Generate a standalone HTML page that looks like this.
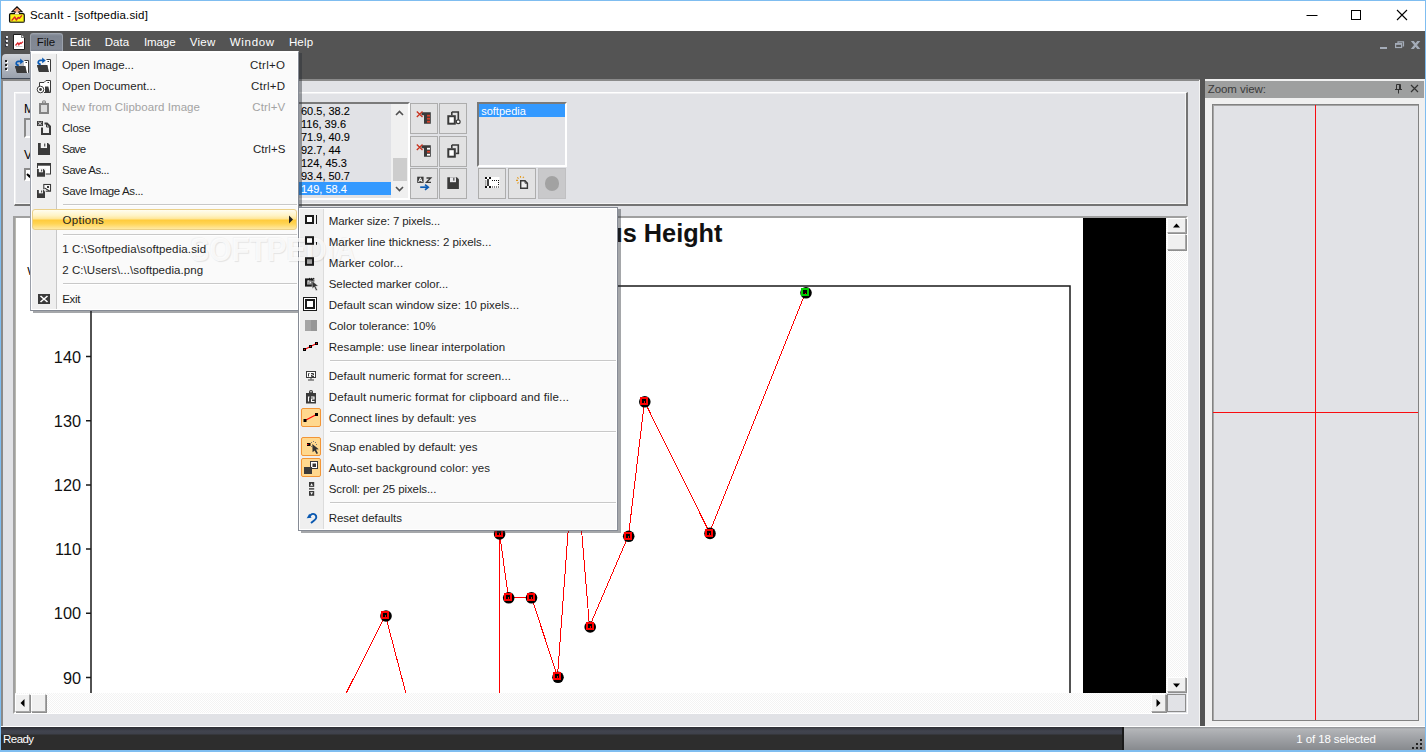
<!DOCTYPE html>
<html>
<head>
<meta charset="utf-8">
<title>ScanIt - [softpedia.sid]</title>
<style>
html,body{margin:0;padding:0;}
body{width:1426px;height:752px;overflow:hidden;background:#545454;font-family:"Liberation Sans",sans-serif;font-size:12px;color:#1e1e1e;position:relative;}
.a{position:absolute;}
.t{position:absolute;white-space:nowrap;line-height:14px;}
#win{left:0;top:0;width:1424px;height:750px;border:1px solid #7fbdf0;}
#title{left:1px;top:1px;width:1424px;height:30px;background:#fff;}
#client{left:3px;top:81px;width:1196px;height:645px;background:#e1e2e6;}
.mi{position:absolute;left:62px;white-space:nowrap;line-height:14px;font-size:12px;color:#1e1e1e;}
.sc{position:absolute;left:0;width:286px;text-align:right;white-space:nowrap;line-height:14px;font-size:12px;color:#1e1e1e;}
.sep{position:absolute;height:1px;background:#c5c5c5;border-bottom:1px solid #fff;}
.btn{position:absolute;width:28px;height:31px;background:#e2e2e3;border:1px solid #adadad;box-sizing:border-box;}
</style>
</head>
<body>
<div class="a" id="win"></div>
<div class="a" id="title"></div>

<!-- title bar -->
<svg class="a" style="left:8px;top:5px" width="18" height="19" viewBox="8 5 18 19">
  <defs><linearGradient id="ga" x1="0" y1="0" x2="0" y2="1"><stop offset="0" stop-color="#ee7a44"/><stop offset="0.55" stop-color="#f4a57e"/><stop offset="1" stop-color="#fff"/></linearGradient></defs>
  <rect x="9.600" y="13.600" width="14.600" height="8.600" rx="1.200" fill="#fbf415" stroke="#0a0a0a" stroke-width="1.300"/>
  <path d="M10.500 21.500 H23.500 V15" fill="none" stroke="#b9b21a" stroke-width="0.800"/>
  <path d="M17 6.800 L22 11.700 H19 V14.300 H15 V11.700 H12 Z" fill="url(#ga)"/>
  <path d="M15 13 V11.700 H12 L17 6.800 L22 11.700 H19 V13" fill="none" stroke="#0a0a0a" stroke-width="1.100" stroke-linejoin="miter"/>
  <path d="M11.600 20.600 L14.800 17 L16.300 20 L18.200 17.400 L19.400 18.200 L21.900 15.400" fill="none" stroke="#d8242a" stroke-width="1.400" stroke-linejoin="round"/>
</svg>
<div class="t" style="left:30.0px;top:8.400px;font-size:11.5px;letter-spacing:0.176px;color:#000;">ScanIt - [softpedia.sid]</div>
<svg class="a" style="left:1300px;top:1px" width="124" height="30" viewBox="0 0 124 30">
  <path d="M6.5 14.5 H17.5" stroke="#000" stroke-width="1" fill="none"/>
  <rect x="51.500" y="9.500" width="9" height="9" stroke="#000" stroke-width="1" fill="none"/>
  <path d="M97 9 L107 19 M107 9 L97 19" stroke="#000" stroke-width="1.1" fill="none"/>
</svg>

<!-- menubar icons (left) -->
<div class="a" style="left:6px;top:36px;width:2px;height:2px;background:#e6e8ee;box-shadow:0 4px 0 #e6e8ee,0 8px 0 #e6e8ee,-1px 1px 0 #2e3340,-1px 5px 0 #2e3340,-1px 9px 0 #2e3340;"></div>
<svg class="a" style="left:13px;top:34px" width="12" height="16" viewBox="0 0 12 16">
  <path d="M0.500 0.500 H8.500 L11.500 3.500 V15.500 H0.500 Z" fill="#fff" stroke="#1c1c1c" stroke-width="1"/>
  <path d="M8.500 0.500 V3.500 H11.500" fill="#e6e6e6" stroke="#555" stroke-width="0.800"/>
  <path d="M3 12.500 H9.500" stroke="#d0d0d0" stroke-width="1"/>
  <path d="M2.500 11.500 L4.800 8.800 L5.800 10.800 L7.200 8.800 L8 9.600 L10 7.600" fill="none" stroke="#d8242a" stroke-width="1.300"/>
</svg>
<!-- File menu button (open) -->
<div class="a" style="left:30px;top:33px;width:33px;height:19px;border-radius:3px 3px 0 0;background:linear-gradient(#8e95a1 0,#7e8591 2px,#848a96 15px,#6f7581 18px);box-sizing:border-box;border:1px solid #9ca2ac;border-bottom:none;"></div>
<div class="t" style="left:36.7px;top:34.600px;font-size:11.5px;letter-spacing:-0.008px;color:#111;">File</div>
<div class="t" style="left:69.7px;top:34.600px;font-size:11.5px;letter-spacing:0.245px;color:#fff;">Edit</div>
<div class="t" style="left:104.7px;top:34.600px;font-size:11.5px;letter-spacing:0.052px;color:#fff;">Data</div>
<div class="t" style="left:143.9px;top:34.600px;font-size:11.5px;letter-spacing:-0.072px;color:#fff;">Image</div>
<div class="t" style="left:189.7px;top:34.600px;font-size:11.5px;letter-spacing:0.271px;color:#fff;">View</div>
<div class="t" style="left:229.8px;top:34.600px;font-size:11.5px;letter-spacing:0.683px;color:#fff;">Window</div>
<div class="t" style="left:288.9px;top:34.600px;font-size:11.5px;letter-spacing:0.162px;color:#fff;">Help</div>
<!-- MDI child buttons -->
<svg class="a" style="left:1376px;top:38px" width="48" height="14" viewBox="1376 38 48 14">
  <rect x="1380" y="47" width="7" height="2" fill="#a4acb8"/>
  <path d="M1398 43 V41.800 H1403.500 V46 H1402.500" fill="none" stroke="#a4acb8" stroke-width="1.200"/>
  <rect x="1395.600" y="44.100" width="6" height="3.400" fill="none" stroke="#a4acb8" stroke-width="1.200"/><rect x="1395" y="43" width="7.200" height="1.500" fill="#a4acb8"/>
  <path d="M1410.800 41 H1413.800 L1420.300 49 H1417.300 Z M1417.300 41 H1420.300 L1413.800 49 H1410.800 Z" fill="#a4acb8"/>
</svg>

<!-- toolbar -->
<div class="a" style="left:2px;top:54px;width:296px;height:24px;border-radius:4px 0 0 0;background:linear-gradient(#d0d3d9,#b3b8c1 50%,#99a1ad);"></div>
<div class="a" style="left:5px;top:60px;width:2px;height:2px;background:#222;box-shadow:0 4px 0 #222,0 8px 0 #222, 1px 1px 0 #fff, 1px 5px 0 #fff, 1px 9px 0 #fff;"></div>
<svg class="a" style="left:14px;top:58px" width="16" height="16" viewBox="0 0 16 16"><path d="M10.500 2.500 H14.500 V14.500" fill="none" stroke="#3a3a3a" stroke-width="1"/><rect x="10" y="3" width="4" height="6" fill="#fff"/><rect x="11.500" y="4" width="1.500" height="1" fill="#3a3a3a"/>
<path d="M1 8 H11.300 L13 15 H3 Z" fill="#3a3a3a"/><path d="M13 14.500 H14.500" stroke="#3a3a3a" stroke-width="1"/><rect x="11.500" y="8" width="2.500" height="6.500" fill="#fff"/><path d="M11.300 8 L13 15 H14 V14 Z" fill="#fff"/><path d="M1 8 H11.300 L13 15 H3 Z" fill="#3a3a3a"/>
<path d="M4.800 7.300 C1.500 7.300 1.300 3.500 4.500 3.300 L7 3.300" fill="none" stroke="#0a5ab4" stroke-width="1.700"/><path d="M6.200 0.600 L9.700 3.400 L6.200 6.200 Z" fill="#0a5ab4"/></svg>

<!-- client area -->
<div class="a" style="left:2px;top:78px;width:296px;height:1px;background:#3f4856;"></div><div class="a" style="left:1px;top:79px;width:1199px;height:648px;background:#8a8a8a;"></div>
<div class="a" id="client"></div>
<!-- group box -->
<div class="a" style="left:14px;top:92px;width:1174px;height:114px;box-sizing:border-box;border-top:1px solid #fff;border-left:1px solid #fff;border-right:2px solid #747474;border-bottom:2px solid #747474;box-shadow:inset 1px 1px 0 #f0f0f2,inset -1px -1px 0 #f4f4f4;"></div>
<div class="t" style="left:24px;top:102px;color:#000;">Marker</div>
<div class="a" style="left:24px;top:118px;width:90px;height:20px;box-sizing:border-box;border:2px solid;border-color:#8a8a8a #fff #fff #8a8a8a;background:#e1e2e6;"></div>
<div class="t" style="left:24px;top:148px;color:#000;">View</div>
<div class="a" style="left:24px;top:168px;width:13px;height:13px;box-sizing:border-box;border:2px solid;border-color:#8a8a8a #fff #fff #8a8a8a;background:#fff;"></div>
<svg class="a" style="left:26px;top:170px" width="9" height="9" viewBox="0 0 9 9"><path d="M1 4 L3.500 6.500 L8 1.500" stroke="#000" stroke-width="2" fill="none"/></svg>
<!-- data listbox -->
<div class="a" style="left:200px;top:102px;width:210px;height:98px;box-sizing:border-box;border:2px solid;border-color:#7a7a7a #fff #fff #7a7a7a;background:#e1e2e6;"></div>
<div class="a" style="left:202px;top:182px;width:189px;height:13px;background:#3399ff;"></div>
<div class="a" id="lb" style="left:301px;top:104.600px;font-size:11.500px;line-height:13px;color:#000;white-space:nowrap;transform:scaleX(0.955);-webkit-text-stroke-width:0.100px;transform-origin:0 0;">60.5, 38.2<br>116, 39.6<br>71.9, 40.9<br>92.7, 44<br>124, 45.3<br>93.4, 50.7<br><span style="color:#fff">149, 58.4</span></div>
<div class="a" style="left:391px;top:104px;width:17px;height:94px;background:#f0f0f0;"></div>
<div class="a" style="left:392.500px;top:158px;width:14.500px;height:23px;background:#cdcdcd;"></div>
<svg class="a" style="left:392px;top:104px" width="15" height="94" viewBox="0 0 15 94">
  <path d="M4 11 L7.500 7.500 L11 11" fill="none" stroke="#505050" stroke-width="1.600"/>
  <path d="M4 83 L7.500 86.500 L11 83" fill="none" stroke="#505050" stroke-width="1.600"/>
</svg>
<!-- buttons grid -->
<div class="btn" style="left:410px;top:103px;"></div>
<div class="btn" style="left:439px;top:103px;"></div>
<div class="btn" style="left:410px;top:136px;"></div>
<div class="btn" style="left:439px;top:136px;"></div>
<div class="btn" style="left:410px;top:168px;"></div>
<div class="btn" style="left:439px;top:168px;"></div>
<!-- series listbox -->
<div class="a" style="left:477px;top:102px;width:90px;height:65px;box-sizing:border-box;border:2px solid;border-color:#7a7a7a #fff #fff #7a7a7a;background:#e1e2e6;"></div>
<div class="a" style="left:479px;top:104px;width:86px;height:13px;background:#3399ff;"></div>
<div class="t" style="left:481.200px;top:104.600px;font-size:11px;line-height:13px;color:#fff;">softpedia</div>
<div class="btn" style="left:478px;top:168px;"></div>
<div class="btn" style="left:508px;top:168px;"></div>
<div class="btn" style="left:538px;top:168px;background:#c9c9cb;border-color:#c0c0c2;"></div>
<div class="a" style="left:544.700px;top:176px;width:14.600px;height:14.600px;border-radius:8px;background:#a2a2a2;"></div>

<!-- BTNICONS -->
<svg class="a" style="left:408px;top:100px" width="164" height="102" viewBox="408 100 164 102">
<path d="M421.5 112.2 H430.8 V123.7 H424 V115.2 H421.5 Z" fill="#3a3a3a"/><rect x="427" y="114.8" width="3" height="1.800" fill="#d8402a"/><rect x="427" y="117.8" width="3" height="1.800" fill="#d8402a"/><rect x="427" y="120.8" width="3" height="1.800" fill="#d8402a"/><path d="M416.8 111.5 L422.5 117.0 M422.5 111.5 L416.8 117.0" stroke="#c8321e" stroke-width="1.300" fill="none"/><path d="M421.5 145.2 H430.8 V156.7 H424 V148.2 H421.5 Z" fill="#3a3a3a"/><rect x="427" y="147.79999999999998" width="3" height="1.800" fill="#fff"/><rect x="427" y="150.79999999999998" width="3" height="1.800" fill="#d8402a"/><rect x="427" y="153.79999999999998" width="3" height="1.800" fill="#fff"/><path d="M416.8 144.5 L422.5 150.0 M422.5 144.5 L416.8 150.0" stroke="#c8321e" stroke-width="1.300" fill="none"/><path d="M451.8 112.0 H458.3 V120.7" fill="none" stroke="#3a3a3a" stroke-width="1.600"/><path d="M451.8 112.0 V115.2" fill="none" stroke="#3a3a3a" stroke-width="1.600"/><rect x="448.3" y="116.2" width="6.500" height="7.500" fill="#fff" stroke="#3a3a3a" stroke-width="2"/><path d="M455.8 120.7 H458.3" stroke="#3a3a3a" stroke-width="1.4"/><circle cx="458.2" cy="121.7" r="1.900" fill="#fff" stroke="#3a3a3a" stroke-width="1.200"/><path d="M451.8 145.0 H458.3 V153.7" fill="none" stroke="#3a3a3a" stroke-width="1.600"/><path d="M451.8 145.0 V148.2" fill="none" stroke="#3a3a3a" stroke-width="1.600"/><rect x="448.3" y="149.2" width="6.500" height="7.500" fill="#fff" stroke="#3a3a3a" stroke-width="2"/><path d="M455.8 153.39999999999998 H459.1" stroke="#3a3a3a" stroke-width="1.600"/><rect x="417.200" y="176.700" width="6.400" height="6.200" fill="#3a3a3a"/><path d="M418.600 182 L420.400 177.800 L422.200 182 M419.300 180.600 H421.500" stroke="#fff" stroke-width="1" fill="none"/><path d="M426.500 178 H430.800 L426.500 182.300 H431" stroke="#3a3a3a" stroke-width="1.300" fill="none"/><path d="M420.200 187.200 H427.500" stroke="#0a5ab4" stroke-width="1.700" fill="none"/><path d="M425 184.600 L428.300 187.200 L425 189.800" stroke="#0a5ab4" stroke-width="1.600" fill="none"/><path d="M447.3 177.3 H456.90000000000003 L458.90000000000003 179.3 V188.9 H447.3 Z" fill="#3a3a3a"/><rect x="449.97" y="177.3" width="6.03" height="4.87" fill="#e9e9ec"/><rect x="453.29" y="177.8" width="1.1" height="2.92" fill="#3a3a3a"/><rect x="485" y="177" width="14.500" height="11" fill="#fff"/><rect x="485" y="177" width="2" height="2" fill="#111"/><rect x="489" y="177" width="2" height="2" fill="#111"/><rect x="485" y="186" width="2" height="2" fill="#111"/><rect x="489" y="186" width="2" height="2" fill="#111"/><rect x="487.200" y="179" width="1.600" height="7" fill="#111"/><rect x="485.300" y="180.5" width="1" height="1" fill="#111"/><rect x="485.300" y="182.5" width="1" height="1" fill="#111"/><rect x="485.300" y="184.5" width="1" height="1" fill="#111"/><rect x="492" y="180" width="1" height="1" fill="#111"/><rect x="492" y="186.500" width="1" height="1" fill="#111"/><rect x="494" y="180" width="1" height="1" fill="#111"/><rect x="494" y="186.500" width="1" height="1" fill="#111"/><rect x="496" y="180" width="1" height="1" fill="#111"/><rect x="496" y="186.500" width="1" height="1" fill="#111"/><rect x="498" y="180" width="1" height="1" fill="#111"/><rect x="498" y="186.500" width="1" height="1" fill="#111"/><rect x="498" y="182" width="1" height="1" fill="#111"/><rect x="498" y="184" width="1" height="1" fill="#111"/><path d="M520.700 180.700 H525 L527.400 183.200 V188.300 H520.700 Z" fill="#f0f0f0" stroke="#3a3a3a" stroke-width="1.400"/><path d="M525 180.700 V183.200 H527.400" fill="none" stroke="#3a3a3a" stroke-width="0.900"/><path d="M517.300 177.300 L518.600 178.600 M520.500 176.100 V177.700 M522.800 177.700 L524 176.900 M516 180.400 H518 M517.300 183.400 L518.600 182.500" stroke="#e49a1c" stroke-width="1.100" fill="none"/>
</svg>
<!-- /BTNICONS -->
<!-- image panel -->
<div class="a" style="left:13px;top:216px;width:1175px;height:498px;box-sizing:border-box;border:2px solid;border-color:#a0a0a0 #fff #fff #a0a0a0;background:#fff;box-shadow:inset 1px 0 0 #b8b8b0;"></div>
<div class="a" id="img" style="left:16px;top:218px;width:1150px;height:475px;overflow:hidden;background:#fff;">
<svg width="1150" height="475" viewBox="16 218 1150 475" style="position:absolute;left:0;top:0;font-family:'Liberation Sans',sans-serif;">
  <rect x="1083" y="218" width="83" height="475" fill="#000"/>
  <rect x="91" y="286" width="979" height="500" fill="none" stroke="#1a1a1a" stroke-width="1.500"/>
  <g stroke="#1a1a1a" stroke-width="1.500">
    <path d="M86 356.500H91M86 420.700H91M86 484.900H91M86 549.100H91M86 613.300H91M86 677.500H91"/>
  </g>
  <g font-size="16.300" fill="#111" text-anchor="end">
    <text x="81" y="362.500">140</text><text x="81" y="426.700">130</text><text x="81" y="490.900">120</text>
    <text x="81" y="555.100">110</text><text x="81" y="619.300">100</text><text x="81" y="683.500">90</text>
  </g>
  <text x="722.500" y="241.500" font-size="25.300" font-weight="bold" fill="#111" text-anchor="end">Weight versus Height</text>
  <text x="27.300" y="275.300" font-size="11.500" fill="#000">Weight</text>
  <polyline fill="none" stroke="#f00" stroke-width="1" shape-rendering="crispEdges" points="327.5,730 385.5,615.500 415.5,730 499.5,800 499.5,533.500 508.5,597.500 531.5,597.500 557.5,676.500 574.5,444 589.5,626.500 628.5,535.500 644.5,401.500 709.5,532.500 805.5,292.500"/>
  <g id="mk">
<circle cx="386" cy="616" r="5.800" fill="#000"/><rect x="382" y="612" width="6" height="6" fill="#000" stroke="#f00" stroke-width="2" shape-rendering="crispEdges"/><rect x="385" y="615" width="1" height="3" fill="#f00" shape-rendering="crispEdges"/>
<circle cx="499.6" cy="533.9" r="5.800" fill="#000"/><rect x="496" y="530" width="6" height="6" fill="#000" stroke="#f00" stroke-width="2" shape-rendering="crispEdges"/><rect x="499" y="533" width="1" height="3" fill="#f00" shape-rendering="crispEdges"/>
<circle cx="508.7" cy="597.8" r="5.800" fill="#000"/><rect x="505" y="594" width="6" height="6" fill="#000" stroke="#f00" stroke-width="2" shape-rendering="crispEdges"/><rect x="508" y="597" width="1" height="3" fill="#f00" shape-rendering="crispEdges"/>
<circle cx="531.5" cy="597.8" r="5.800" fill="#000"/><rect x="528" y="594" width="6" height="6" fill="#000" stroke="#f00" stroke-width="2" shape-rendering="crispEdges"/><rect x="531" y="597" width="1" height="3" fill="#f00" shape-rendering="crispEdges"/>
<circle cx="558" cy="677.3" r="5.800" fill="#000"/><rect x="554" y="673" width="6" height="6" fill="#000" stroke="#f00" stroke-width="2" shape-rendering="crispEdges"/><rect x="557" y="676" width="1" height="3" fill="#f00" shape-rendering="crispEdges"/>
<circle cx="575" cy="444" r="5.800" fill="#000"/><rect x="571" y="440" width="6" height="6" fill="#000" stroke="#f00" stroke-width="2" shape-rendering="crispEdges"/><rect x="574" y="443" width="1" height="3" fill="#f00" shape-rendering="crispEdges"/>
<circle cx="590.2" cy="627" r="5.800" fill="#000"/><rect x="587" y="623" width="6" height="6" fill="#000" stroke="#f00" stroke-width="2" shape-rendering="crispEdges"/><rect x="590" y="626" width="1" height="3" fill="#f00" shape-rendering="crispEdges"/>
<circle cx="628.7" cy="536.3" r="5.800" fill="#000"/><rect x="625" y="533" width="6" height="6" fill="#000" stroke="#f00" stroke-width="2" shape-rendering="crispEdges"/><rect x="628" y="536" width="1" height="3" fill="#f00" shape-rendering="crispEdges"/>
<circle cx="644.8" cy="401.8" r="5.800" fill="#000"/><rect x="641" y="398" width="6" height="6" fill="#000" stroke="#f00" stroke-width="2" shape-rendering="crispEdges"/><rect x="644" y="401" width="1" height="3" fill="#f00" shape-rendering="crispEdges"/>
<circle cx="710" cy="533.4" r="5.800" fill="#000"/><rect x="706" y="530" width="6" height="6" fill="#000" stroke="#f00" stroke-width="2" shape-rendering="crispEdges"/><rect x="709" y="533" width="1" height="3" fill="#f00" shape-rendering="crispEdges"/>
<circle cx="806" cy="292.800" r="5.800" fill="#000"/><rect x="802" y="289" width="6" height="6" fill="#000" stroke="#00cc00" stroke-width="2" shape-rendering="crispEdges"/><rect x="805" y="293" width="1" height="1" fill="#f00"/>
  </g>
</svg>
</div>
<!-- scrollbars -->
<style>
.trk{position:absolute;background-color:#f3f3f3;background-image:linear-gradient(45deg,#fff 25%,transparent 25%,transparent 75%,#fff 75%),linear-gradient(45deg,#fff 25%,transparent 25%,transparent 75%,#fff 75%);background-size:2px 2px;background-position:0 0,1px 1px;}
.sb{position:absolute;box-sizing:border-box;background:#f0f0f0;border:1px solid;border-color:#fff #a6a6a6 #a6a6a6 #fff;box-shadow:1px 1px 0 #8e8e8e;}
</style>
<div class="trk" style="left:1166px;top:218px;width:21px;height:475px;"></div>
<div class="trk" style="left:15px;top:693px;width:1151px;height:20px;"></div>
<div class="a" style="left:1166px;top:693px;width:21px;height:20px;background:#e1e2e6;"></div>
<div class="sb" style="left:1167px;top:218px;width:19px;height:15px;"></div>
<div class="sb" style="left:1167px;top:234px;width:19px;height:16px;"></div>
<div class="sb" style="left:1167px;top:677px;width:19px;height:15px;"></div>
<div class="sb" style="left:1167px;top:694px;width:19px;height:18px;background:#e1e2e6;border-color:#8c8c8c;box-shadow:none;"></div>
<div class="sb" style="left:15px;top:694px;width:15px;height:18px;"></div>
<div class="sb" style="left:31px;top:694px;width:15px;height:18px;"></div>
<div class="sb" style="left:1151px;top:694px;width:15px;height:18px;"></div>
<svg class="a" style="left:1166px;top:218px" width="21" height="495" viewBox="0 0 21 495">
  <path d="M7 9.500 L10.500 5.500 L14 9.500 Z" fill="#000"/>
  <path d="M7 465.500 L10.500 469.500 L14 465.500 Z" fill="#000"/>
</svg>
<svg class="a" style="left:15px;top:694px" width="1151" height="18" viewBox="0 0 1151 18">
  <path d="M9.500 5 L5.500 9 L9.500 13 Z" fill="#000"/>
  <path d="M1141.500 5 L1145.500 9 L1141.500 13 Z" fill="#000"/>
</svg>

<!-- splitter -->
<div class="a" style="left:1200px;top:79px;width:5px;height:648px;background:#545454;"></div>
<div class="a" style="left:1199px;top:80px;width:1px;height:647px;background:#f4f4f4;"></div>
<!-- zoom panel -->
<div class="a" style="left:1205px;top:79px;width:220px;height:648px;background:#f0f0f0;"></div>
<div class="a" style="left:1205px;top:81px;width:219px;height:17px;background:#9e9f9f;"></div>
<div class="t" style="left:1207.700px;top:82px;font-size:11.5px;letter-spacing:-0.064px;color:#3a3a3a;">Zoom view:</div>
<svg class="a" style="left:1392px;top:82px" width="30" height="14" viewBox="0 0 30 14">
  <path d="M4.500 2.500 H8.500 V7.500 M3 7.500 H10 M6.500 7.500 V11.500 M4.500 2.500 V7.500 M7.500 3 V7" fill="none" stroke="#333" stroke-width="1"/>
  <path d="M19 3 L26 10 M26 3 L19 10" stroke="#333" stroke-width="1.200" fill="none"/>
</svg>
<div class="a" style="left:1212px;top:104px;width:207px;height:617px;box-sizing:border-box;border:1px solid #828282;background:#e1e2e6;box-shadow:inset 1px 1px 0 #a5a5a5;"></div>
<div class="a" style="left:1315px;top:105px;width:1px;height:615px;background:#f80c10;"></div>
<div class="a" style="left:1213px;top:412px;width:205px;height:1px;background:#f80c10;"></div>

<!-- status bar -->
<div class="a" style="left:1px;top:726px;width:1424px;height:1px;background:#fff;"></div>
<div class="a" style="left:1px;top:727px;width:1424px;height:24px;background:linear-gradient(#2c2d33 0,#41444f 4px,#3e414b 7px,#2d2d2d 8px,#2d2d2d 100%);"></div>
<div class="t" style="left:3.1px;top:731.900px;font-size:11.5px;letter-spacing:-0.561px;color:#fff;">Ready</div>
<div class="a" style="left:1124px;top:727px;width:301px;height:24px;background:linear-gradient(#8d8f93 0,#b4b6b9 2px,#a6a8ac 8px,#85888c 100%);"></div>
<div class="a" style="left:1122px;top:727px;width:2px;height:24px;background:#1a1a1a;"></div>
<div class="t" style="left:1296.300px;top:731.900px;color:#fff;font-size:11.5px;letter-spacing:-0.109px;">1 of 18 selected</div>
<svg class="a" style="left:1411px;top:738px" width="13" height="13" viewBox="0 0 13 13">
  <g fill="#222"><rect x="9" y="1" width="2" height="2"/><rect x="5" y="5" width="2" height="2"/><rect x="9" y="5" width="2" height="2"/><rect x="1" y="9" width="2" height="2"/><rect x="5" y="9" width="2" height="2"/><rect x="9" y="9" width="2" height="2"/></g>
</svg>
<div class="a" style="left:0;top:750px;width:1426px;height:2px;background:#7fbdf0;"></div>

<!-- MENUS -->
<div class="a" style="left:30px;top:51px;width:269px;height:260px;box-sizing:border-box;background:#fafafa;border:1px solid #9a9fa9;border-right-color:#868b95;border-bottom-color:#868b95;border-top-color:#fff;box-shadow:inset 0 0 0 1px #fff,3px 2px 0 rgba(40,45,52,0.42);"></div>
<div class="a" style="left:32px;top:54px;width:24px;height:255px;background:#efefef;border-right:1px solid #c8c8c8;"></div>
<div class="a" style="left:298px;top:207px;width:320px;height:324px;box-sizing:border-box;background:#fafafa;border:1px solid #868b95;box-shadow:inset 0 0 0 1px #fff,3px 2px 0 rgba(40,45,52,0.42);"></div>
<div class="a" style="left:300px;top:209px;width:23px;height:320px;background:#efefef;border-right:1px solid #dcdcdc;"></div>
<div class="a" style="left:190px;top:232px;font-size:32.500px;line-height:36px;font-weight:bold;color:rgba(255,255,255,0.800);text-shadow:1px 1px 1px rgba(0,0,0,0.09),-1px -1px 1px rgba(0,0,0,0.03);white-space:nowrap;transform:scaleX(0.890);transform-origin:0 0;">SOFTPEDIA</div>
<!-- File menu -->
<svg class="a" style="left:36px;top:57px" width="16" height="16" viewBox="0 0 16 16"><path d="M10.500 2.500 H14.500 V14.500" fill="none" stroke="#3a3a3a" stroke-width="1"/><rect x="10" y="3" width="4" height="6" fill="#fff"/><rect x="11.500" y="4" width="1.500" height="1" fill="#3a3a3a"/>
<path d="M1 8 H11.300 L13 15 H3 Z" fill="#3a3a3a"/><path d="M13 14.500 H14.500" stroke="#3a3a3a" stroke-width="1"/><rect x="11.500" y="8" width="2.500" height="6.500" fill="#fff"/><path d="M11.300 8 L13 15 H14 V14 Z" fill="#fff"/><path d="M1 8 H11.300 L13 15 H3 Z" fill="#3a3a3a"/>
<path d="M4.800 7.300 C1.500 7.300 1.300 3.500 4.500 3.300 L7 3.300" fill="none" stroke="#0a5ab4" stroke-width="1.700"/><path d="M6.200 0.600 L9.700 3.400 L6.200 6.200 Z" fill="#0a5ab4"/></svg>
<div class="t" style="left:62.0px;top:57.5px;font-size:11.5px;letter-spacing:-0.083px;color:#1e1e1e;">Open Image...</div>
<div class="t" style="left:249.9px;top:57.5px;font-size:11.5px;letter-spacing:0.326px;color:#1e1e1e;">Ctrl+O</div>
<svg class="a" style="left:36px;top:78px" width="16" height="16" viewBox="0 0 16 16"><path d="M3.500 9 V4.500 H8 L10 2.500 H14.500 V14.500 H8" fill="#fff" stroke="#3a3a3a" stroke-width="1"/><rect x="11.500" y="4" width="1.500" height="1" fill="#3a3a3a"/>
<path d="M9 8.500 H12.300 L13.800 14.500 H9 Z" fill="#3a3a3a"/>
<circle cx="4.500" cy="11.500" r="3.300" fill="#fff" stroke="#3a3a3a" stroke-width="1"/><circle cx="4.500" cy="11.500" r="1.400" fill="#3a3a3a"/></svg>
<div class="t" style="left:62.0px;top:78.5px;font-size:11.5px;letter-spacing:0.048px;color:#1e1e1e;">Open Document...</div>
<div class="t" style="left:250.9px;top:78.5px;font-size:11.5px;letter-spacing:0.266px;color:#1e1e1e;">Ctrl+D</div>
<svg class="a" style="left:36px;top:99px" width="16" height="16" viewBox="0 0 16 16"><path d="M6 4.500 V3 Q6 1.200 8 1.200 Q10 1.200 10 3 V4.500" fill="#8a8a8a"/><circle cx="8" cy="3" r="0.800" fill="#eee"/><rect x="3" y="4" width="10" height="11" fill="#848484"/><rect x="5" y="6" width="6" height="7" fill="#dcdcdc"/></svg>
<div class="t" style="left:62.0px;top:99.5px;font-size:11.5px;letter-spacing:0.051px;color:#a3a3a3;">New from Clipboard Image</div>
<div class="t" style="left:252.3px;top:99.5px;font-size:11.5px;letter-spacing:0.138px;color:#a3a3a3;">Ctrl+V</div>
<svg class="a" style="left:36px;top:120px" width="16" height="16" viewBox="0 0 16 16"><rect x="1" y="1" width="6" height="5" fill="#3a3a3a"/><path d="M2.300 2 L5.700 5 M5.700 2 L2.300 5" stroke="#fff" stroke-width="0.900"/>
<path d="M6 7.500 V14 H14 V6.500 L11 3.500 H8.500" fill="none" stroke="#3a3a3a" stroke-width="2"/><path d="M10.500 4 V7 H14" fill="none" stroke="#3a3a3a" stroke-width="1"/></svg>
<div class="t" style="left:62.0px;top:120.5px;font-size:11.5px;letter-spacing:-0.220px;color:#1e1e1e;">Close</div>
<svg class="a" style="left:36px;top:141px" width="16" height="16" viewBox="0 0 16 16"><path d="M2 2 H12 L14 4 V14 H2 Z" fill="#3a3a3a"/><rect x="4.76" y="2" width="6.24" height="5.04" fill="#f4f4f4"/><rect x="8.19" y="2.5" width="1.08" height="3.02" fill="#3a3a3a"/></svg>
<div class="t" style="left:62.0px;top:141.5px;font-size:11.5px;letter-spacing:-0.728px;color:#1e1e1e;">Save</div>
<div class="t" style="left:252.9px;top:141.5px;font-size:11.5px;letter-spacing:0.038px;color:#1e1e1e;">Ctrl+S</div>
<svg class="a" style="left:36px;top:162px" width="16" height="16" viewBox="0 0 16 16"><rect x="1.500" y="2" width="13" height="10" fill="#fff" stroke="#3a3a3a" stroke-width="1"/><rect x="1" y="1" width="14" height="2.700" fill="#3a3a3a"/><rect x="0.500" y="6.300" width="9.200" height="9" fill="#efefef"/><path d="M1 7 H7.5600000000000005 L9 8.44 V14.8 H1 Z" fill="#3a3a3a"/><rect x="2.84" y="7" width="4.16" height="3.28" fill="#f4f4f4"/><rect x="5.13" y="7.5" width="1.00" height="1.97" fill="#3a3a3a"/></svg>
<div class="t" style="left:62.0px;top:162.5px;font-size:11.5px;letter-spacing:-0.488px;color:#1e1e1e;">Save As...</div>
<svg class="a" style="left:36px;top:183px" width="16" height="16" viewBox="0 0 16 16"><rect x="7.800" y="1.500" width="6.700" height="6.700" fill="#fff" stroke="#3a3a3a" stroke-width="1.100"/><rect x="11" y="3" width="2" height="2" fill="#3a3a3a"/><path d="M8.500 5 L13.500 8" stroke="#3a3a3a" stroke-width="1.200"/><rect x="0.500" y="6.300" width="9.200" height="9" fill="#efefef"/><path d="M1 7 H7.5600000000000005 L9 8.44 V14.9 H1 Z" fill="#3a3a3a"/><rect x="2.84" y="7" width="4.16" height="3.32" fill="#f4f4f4"/><rect x="5.13" y="7.5" width="1.00" height="1.99" fill="#3a3a3a"/></svg>
<div class="t" style="left:62.0px;top:183.5px;font-size:11.5px;letter-spacing:-0.359px;color:#1e1e1e;">Save Image As...</div>
<div class="a" style="left:63px;top:204px;width:234px;height:1px;background:#c8c8c8;"></div><div class="a" style="left:63px;top:205px;width:234px;height:1px;background:#fff;"></div>
<div class="a" style="left:32px;top:209px;width:265px;height:21px;box-sizing:border-box;border:1px solid #ead08a;border-radius:3px;background:linear-gradient(#fffdf0 0,#fff3c4 30%,#ffe696 47%,#ffcb3c 53%,#ffd454 72%,#ffe9a4 100%);"></div>
<div class="t" style="left:62.5px;top:212.5px;font-size:11.5px;letter-spacing:0.281px;color:#1e1e1e;">Options</div>
<svg class="a" style="left:288px;top:215px" width="6" height="9" viewBox="0 0 6 9"><path d="M1 0.500 L5 4.500 L1 8.500 Z" fill="#222"/></svg>
<div class="a" style="left:63px;top:234px;width:234px;height:1px;background:#c8c8c8;"></div><div class="a" style="left:63px;top:235px;width:234px;height:1px;background:#fff;"></div>
<div class="t" style="left:62.2px;top:241.5px;font-size:11.5px;letter-spacing:0.120px;color:#1e1e1e;">1 C:\Softpedia\softpedia.sid</div>
<div class="t" style="left:62.2px;top:262.5px;font-size:11.5px;letter-spacing:0.059px;color:#1e1e1e;">2 C:\Users\...\softpedia.png</div>
<div class="a" style="left:63px;top:283px;width:234px;height:1px;background:#c8c8c8;"></div><div class="a" style="left:63px;top:284px;width:234px;height:1px;background:#fff;"></div>
<svg class="a" style="left:36px;top:291px" width="16" height="16" viewBox="0 0 16 16"><rect x="2" y="3" width="12" height="10" fill="#3a3a3a"/><path d="M4.500 5 L11.500 11 M11.500 5 L4.500 11" stroke="#fff" stroke-width="1.600"/></svg>
<div class="t" style="left:62.2px;top:291.5px;font-size:11.5px;letter-spacing:-0.293px;color:#1e1e1e;">Exit</div>
<!-- Options submenu -->
<svg class="a" style="left:303px;top:213px" width="16" height="16" viewBox="0 0 16 16"><rect x="3" y="3" width="7" height="7" fill="#fff" stroke="#1a1a1a" stroke-width="2"/><rect x="13" y="2" width="1" height="9" fill="#1a1a1a"/></svg>
<div class="t" style="left:328.7px;top:213.5px;font-size:11.5px;letter-spacing:-0.125px;color:#1e1e1e;">Marker size: 7 pixels...</div>
<svg class="a" style="left:303px;top:234px" width="16" height="16" viewBox="0 0 16 16"><rect x="3" y="3.200" width="7" height="6.600" fill="#fff" stroke="#1a1a1a" stroke-width="2"/><rect x="13" y="8" width="1" height="2.800" fill="#1a1a1a"/></svg>
<div class="t" style="left:328.7px;top:234.5px;font-size:11.5px;letter-spacing:-0.008px;color:#1e1e1e;">Marker line thickness: 2 pixels...</div>
<svg class="a" style="left:303px;top:255px" width="16" height="16" viewBox="0 0 16 16"><defs><linearGradient id="gm" x1="0" y1="0" x2="0" y2="1"><stop offset="0" stop-color="#8c8c8c"/><stop offset="1" stop-color="#b4b4b4"/></linearGradient></defs><rect x="3" y="3.200" width="7" height="6.600" fill="url(#gm)" stroke="#1a1a1a" stroke-width="2"/></svg>
<div class="t" style="left:328.7px;top:255.5px;font-size:11.5px;letter-spacing:0.110px;color:#1e1e1e;">Marker color...</div>
<svg class="a" style="left:303px;top:276px" width="16" height="16" viewBox="0 0 16 16"><rect x="3" y="3.400" width="6.500" height="6.200" fill="#a0a0a0" stroke="#1a1a1a" stroke-width="2"/><path d="M6 2.400 H11.500 M11 2.400 V6" stroke="#1a1a1a" stroke-width="1" stroke-dasharray="1 1"/><rect x="5" y="4.500" width="1" height="1" fill="#eee"/><rect x="7" y="6" width="1" height="1" fill="#eee"/><path d="M9 4.800 L15.300 10 L12.600 10.300 L14.500 14 L13 14.800 L11.200 11 L9.300 12.800 Z" fill="#333" stroke="#efefef" stroke-width="0.500"/></svg>
<div class="t" style="left:328.7px;top:276.5px;font-size:11.5px;letter-spacing:-0.054px;color:#1e1e1e;">Selected marker color...</div>
<svg class="a" style="left:303px;top:297px" width="16" height="16" viewBox="0 0 16 16"><rect x="0.500" y="0.500" width="13" height="13" fill="#fff" stroke="#1a1a1a" stroke-width="1"/><rect x="3" y="3" width="8" height="8" fill="#fff" stroke="#1a1a1a" stroke-width="2"/></svg>
<div class="t" style="left:328.7px;top:297.5px;font-size:11.5px;letter-spacing:-0.002px;color:#1e1e1e;">Default scan window size: 10 pixels...</div>
<svg class="a" style="left:303px;top:318px" width="16" height="16" viewBox="0 0 16 16"><rect x="2" y="2" width="6" height="11" fill="#a4a4a4"/><rect x="8" y="2" width="6" height="11" fill="#969696"/></svg>
<div class="t" style="left:328.7px;top:318.5px;font-size:11.5px;letter-spacing:-0.020px;color:#1e1e1e;">Color tolerance: 10%</div>
<svg class="a" style="left:303px;top:339px" width="16" height="16" viewBox="0 0 16 16"><path d="M1.500 10.500 L13.500 4.500" stroke="#f00" stroke-width="1.200"/><rect x="0.0" y="9.0" width="3" height="3" fill="#000"/><rect x="1.0" y="10.0" width="1" height="1" fill="#f00"/><rect x="6.0" y="6.0" width="3" height="3" fill="#000"/><rect x="7.0" y="7.0" width="1" height="1" fill="#f00"/><rect x="12.0" y="3.0" width="3" height="3" fill="#000"/><rect x="13.0" y="4.0" width="1" height="1" fill="#f00"/></svg>
<div class="t" style="left:328.7px;top:339.5px;font-size:11.5px;letter-spacing:0.080px;color:#1e1e1e;">Resample: use linear interpolation</div>
<div class="a" style="left:330px;top:360px;width:286px;height:1px;background:#c8c8c8;"></div><div class="a" style="left:330px;top:361px;width:286px;height:1px;background:#fff;"></div>
<svg class="a" style="left:303px;top:368px" width="16" height="16" viewBox="0 0 16 16"><rect x="3.500" y="3.500" width="9" height="6" fill="#fff" stroke="#3a3a3a" stroke-width="1"/><path d="M5.500 8.500 V5.500 H6.500 M8 5.500 H10.500 V7 H8.500 V8.500 H11" fill="none" stroke="#3a3a3a" stroke-width="1"/><rect x="7.500" y="10" width="1" height="1.500" fill="#3a3a3a"/><rect x="5" y="11.500" width="6" height="1" fill="#3a3a3a"/></svg>
<div class="t" style="left:328.7px;top:368.5px;font-size:11.5px;letter-spacing:0.060px;color:#1e1e1e;">Default numeric format for screen...</div>
<svg class="a" style="left:303px;top:389px" width="16" height="16" viewBox="0 0 16 16"><path d="M6 4 V2.800 Q6 1 8 1 Q10 1 10 2.800 V4" fill="#3a3a3a"/><circle cx="8" cy="2.700" r="0.800" fill="#eee"/><rect x="3" y="4" width="10" height="10.500" fill="#3a3a3a"/><path d="M5.500 12.500 V8 H6.500 M8 8 H11 V10 H8.500 V12.500 H11.500" fill="none" stroke="#fff" stroke-width="1.100"/></svg>
<div class="t" style="left:328.7px;top:389.5px;font-size:11.5px;letter-spacing:0.163px;color:#1e1e1e;">Default numeric format for clipboard and file...</div>
<div class="a" style="left:301px;top:408px;width:20px;height:19px;box-sizing:border-box;border:1px solid #f29536;border-radius:2px;background:#ffd88e;"></div>
<svg class="a" style="left:303px;top:410px" width="16" height="16" viewBox="0 0 16 16"><path d="M2 10.500 L13.500 4.500" stroke="#f00" stroke-width="1.300"/><rect x="0.5" y="9.0" width="3" height="3" fill="#000"/><rect x="12.0" y="3.0" width="3" height="3" fill="#000"/></svg>
<div class="t" style="left:328.7px;top:410.5px;font-size:11.5px;letter-spacing:0.016px;color:#1e1e1e;">Connect lines by default: yes</div>
<div class="a" style="left:330px;top:431px;width:286px;height:1px;background:#c8c8c8;"></div><div class="a" style="left:330px;top:432px;width:286px;height:1px;background:#fff;"></div>
<div class="a" style="left:301px;top:437px;width:20px;height:19px;box-sizing:border-box;border:1px solid #f29536;border-radius:2px;background:#ffd88e;"></div>
<svg class="a" style="left:303px;top:439px" width="16" height="16" viewBox="0 0 16 16"><rect x="4" y="4" width="3.500" height="3" fill="#000"/><rect x="4" y="5" width="1.500" height="1" fill="#f00"/><g fill="#777"><rect x="8" y="3" width="1" height="1"/><rect x="10" y="2" width="1" height="1"/><rect x="12" y="3" width="1" height="1"/><rect x="8" y="7" width="1" height="1"/><rect x="13" y="5" width="1" height="1"/></g><path d="M9.300 5 L15.800 10.300 L13 10.600 L15 14.300 L13.500 15.100 L11.600 11.400 L9.600 13.300 Z" fill="#333"/></svg>
<div class="t" style="left:328.7px;top:439.5px;font-size:11.5px;letter-spacing:0.017px;color:#1e1e1e;">Snap enabled by default: yes</div>
<div class="a" style="left:301px;top:458px;width:20px;height:19px;box-sizing:border-box;border:1px solid #f29536;border-radius:2px;background:#ffd88e;"></div>
<svg class="a" style="left:303px;top:460px" width="16" height="16" viewBox="0 0 16 16"><rect x="7.500" y="1.500" width="7" height="7" fill="#fff" stroke="#3a3a3a" stroke-width="1"/><rect x="9.500" y="3.500" width="3.500" height="3.500" fill="#3a3a3a"/><rect x="1" y="7" width="8" height="7" fill="#3a3a3a"/></svg>
<div class="t" style="left:328.7px;top:460.5px;font-size:11.5px;letter-spacing:0.096px;color:#1e1e1e;">Auto-set background color: yes</div>
<svg class="a" style="left:303px;top:481px" width="16" height="16" viewBox="0 0 16 16"><rect x="6" y="1" width="5.200" height="4.900" fill="#3a3a3a"/><path d="M7.200 4.700 L8.600 2.200 L10 4.700 Z" fill="#fff"/><rect x="6" y="7.200" width="5.200" height="1.400" fill="#3a3a3a"/><rect x="6" y="10" width="5.200" height="4.800" fill="#3a3a3a"/><path d="M7.200 11.200 L8.600 13.700 L10 11.200 Z" fill="#fff"/></svg>
<div class="t" style="left:328.7px;top:481.5px;font-size:11.5px;letter-spacing:-0.097px;color:#1e1e1e;">Scroll: per 25 pixels...</div>
<div class="a" style="left:330px;top:502px;width:286px;height:1px;background:#c8c8c8;"></div><div class="a" style="left:330px;top:503px;width:286px;height:1px;background:#fff;"></div>
<svg class="a" style="left:303px;top:510px" width="16" height="16" viewBox="0 0 16 16"><path d="M6.800 6.400 A3.300 3.300 0 1 1 11.700 10 L8 13" fill="none" stroke="#0a58b0" stroke-width="1.900"/><path d="M3.700 8.300 L6.300 3.700 L8.500 7.800 Z" fill="#0a58b0"/></svg>
<div class="t" style="left:328.7px;top:510.5px;font-size:11.5px;letter-spacing:-0.022px;color:#1e1e1e;">Reset defaults</div>
<!-- /MENUS -->
</body>
</html>
